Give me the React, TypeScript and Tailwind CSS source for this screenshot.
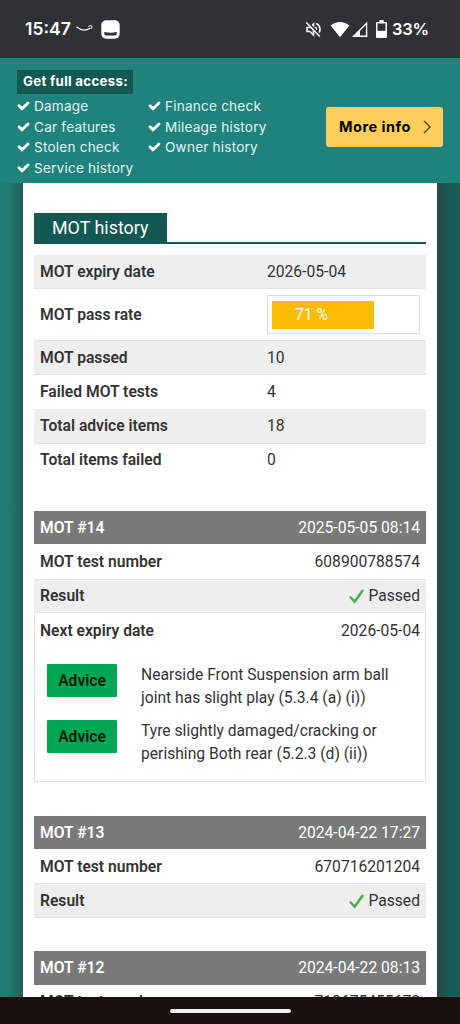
import type { ReactNode } from 'react';

const FEATURES = [
  ['Damage', 'Car features', 'Stolen check', 'Service history'],
  ['Finance check', 'Mileage history', 'Owner history'],
];

const PASS_RATE = 71;

const ADVICE = [
  ['Nearside Front Suspension arm ball', 'joint has slight play (5.3.4 (a) (i))'],
  ['Tyre slightly damaged/cracking or', 'perishing Both rear (5.2.3 (d) (ii))'],
];

function StatusBar() {
  return (
    <header className="flex h-[58px] shrink-0 items-center bg-[#303135] pl-[25px] pr-8 font-['Inter',sans-serif] text-white">
      <span className="w-[51px] whitespace-nowrap text-[17.500px] font-semibold leading-none">15:47</span>
      <svg className="h-[8px] w-[18px]" viewBox="0 0 18 8" fill="none" stroke="#fff">
        <path d="M.8 2C5 5.5 10 5.800 14 3.300" strokeWidth="1.300" strokeLinecap="round" />
        <path d="M12.300 1.300C14.500.7 16 .7 16 1.200c0 .8-.3 1.800-1 2.700" strokeWidth="1" />
      </svg>
      <svg className="ml-[7px] h-[19px] w-[19px]" viewBox="0 0 19 19">
        <rect x=".3" y=".3" width="18.400" height="18.400" rx="5" fill="#fff" />
        <path d="M3.300 12c4 1 8.500 1 12.500 0v1.500c0 1.200-.7 1.900-1.900 1.900H5.200c-1.200 0-1.900-.7-1.900-1.900Z" fill="#303135" />
      </svg>
      <svg className="ml-auto h-[17px] w-[17px]" viewBox="0 0 17 17" fill="none" stroke="#f1f1f1" strokeWidth="1.600">
        <path d="M2 6.500h3L8.500 3v11L5 10.500H2Z" />
        <path d="M10.500 6c1.200 1.300 1.200 3.700 0 5M11 2.500c4.700 1.500 5 7.500 2.200 10" />
        <path d="m2.300 1 13.500 14" stroke="#303135" strokeWidth="2.500" />
        <path d="m1.300 1.500 13.500 14" />
      </svg>
      <svg className="ml-[8px] h-[17px] w-[20px]" viewBox="0 0 20 17">
        <path d="M.6 4.500C6-.3 14-.3 19.400 4.500L10 16.300Z" fill="#fff" />
      </svg>
      <svg className="ml-[2px] h-[17px] w-[16px]" viewBox="0 0 16 17">
        <path d="M14.600 2.300v13H1.700Z" fill="none" stroke="#fff" strokeWidth="1.400" />
        <path d="M8 9v6H1.500Z" fill="#fff" />
      </svg>
      <svg className="ml-[8px] h-[18px] w-[11px]" viewBox="0 0 11 18">
        <path d="M3.300 0h4.400v2H10q1 0 1 1v14q0 1-1 1H1q-1 0-1-1V3q0-1 1-1h2.300Z" fill="#fff" />
        <path d="M1.500 3.500h8v7.300h-8Z" fill="#303135" />
      </svg>
      <span className="ml-[5px] w-[36px] whitespace-nowrap text-[16.500px] font-semibold leading-none tracking-[-0.2px]">33%</span>
    </header>
  );
}

function FeatureCheck() {
  return (
    <svg className="mr-[4px] h-[10px] w-[13px]" viewBox="0 0 13 10">
      <path d="m2 4.800 3 3L11 2" fill="none" stroke="#fff" strokeWidth="2.800" strokeLinecap="round" />
    </svg>
  );
}

function PromoBar() {
  return (
    <section className="flex h-[125px] shrink-0 bg-[#1f827c] font-['Inter',sans-serif] text-white">
      <div className="w-[309px] shrink-0 pl-[17px] pt-[12px]">
        <h2 className="flex h-6 w-[116px] items-center whitespace-nowrap bg-[#145853] pl-[6px] text-[13.250px] font-bold tracking-[0.3px]">
          Get full access:
        </h2>
        <div className="mt-[2px] flex">
          {FEATURES.map((column) => (
            <ul key={column[0]} className="w-[131px] shrink-0">
              {column.map((item) => (
                <li key={item} className="flex h-[20.600px] items-center whitespace-nowrap text-[13.600px] tracking-[0.2px] text-[#e2f3f1]">
                  <FeatureCheck />
                  {item}
                </li>
              ))}
            </ul>
          ))}
        </div>
      </div>
      <button className="ml-[17px] mt-[49px] flex h-10 w-[117px] items-center justify-between whitespace-nowrap rounded-[3px] bg-[#ffce5a] pl-[13px] pr-[12px] text-[14.500px] font-bold tracking-[0.500px] text-black">
        <span className="-mt-px">More info</span>
        <svg className="h-[14px] w-[8px]" viewBox="0 0 8 14" fill="none" stroke="#4d3a10" strokeWidth="1.300">
          <path d="m1 1 6 6-6 6" />
        </svg>
      </button>
    </section>
  );
}

function SummaryRow({ label, value, shaded }: { label: string; value: string; shaded?: boolean }) {
  return (
    <div className={`flex h-[34.300px] items-center border-b pl-[6px] ${shaded ? 'border-[#e2e2e2] bg-[#eee]' : 'border-transparent'}`}>
      <span className="w-[227px] font-semibold">{label}</span>
      <span>{value}</span>
    </div>
  );
}

function TestHeader({ title, date }: { title: string; date: string }) {
  return (
    <div className="flex h-[33.300px] items-center justify-between bg-[#7a7a7a] px-[6px] text-white">
      <span className="font-semibold">{title}</span>
      <span>{date}</span>
    </div>
  );
}

function TestRow({ label, children, shaded }: { label: string; children: ReactNode; shaded?: boolean }) {
  return (
    <div className={`flex h-[34.300px] items-center justify-between px-[6px] ${shaded ? 'border-y border-[#e2e2e2] bg-[#eee]' : ''}`}>
      <span className="font-semibold">{label}</span>
      <span className="flex items-center">{children}</span>
    </div>
  );
}

function Passed() {
  return (
    <>
      <svg className="mr-[4px] mt-[2px] h-[15px] w-[15px]" viewBox="0 0 15 15">
        <path d="m1.800 8.500 3.800 4.300L13.500 1.800" fill="none" stroke="#4cae44" strokeWidth="2.500" strokeLinecap="round" />
      </svg>
      Passed
    </>
  );
}

export default function App() {
  return (
    <div className="flex h-[1024px] w-[460px] flex-col overflow-hidden">
      <StatusBar />
      <PromoBar />

      <div className="flex h-[814px] shrink-0 overflow-hidden">
        <div className="w-[23px] shrink-0 bg-linear-to-r from-[#1e7d76] from-30% to-[#265e5b]" />

        <main className="h-full w-[414px] shrink-0 overflow-hidden bg-white px-[11px] pt-[30px] font-['Roboto',sans-serif] text-[15.650px] text-[#333]">
          <div className="h-[31px] border-b-2 border-[#145853]">
            <h1 className="flex h-[29px] w-[133px] items-center whitespace-nowrap bg-[#145853] pl-[18px] pt-[2px] text-[17.900px] text-white">
              MOT history
            </h1>
          </div>

          <section className="mt-[11px]">
            <SummaryRow label="MOT expiry date" value="2026-05-04" shaded />
            <div className="flex h-[50.400px] items-center pl-[6px]">
              <span className="w-[227px] font-semibold">MOT pass rate</span>
              <div className="h-[39px] w-[153px] border border-[#ddd] p-[4px] pt-[5px]">
                <div
                  className="flex h-[28px] items-center bg-[#fbbc05] pl-[23px] text-white"
                  style={{ width: `${PASS_RATE}%` }}
                >
                  {PASS_RATE} %
                </div>
              </div>
            </div>
            <div className="border-t border-[#e2e2e2]">
              <SummaryRow label="MOT passed" value="10" shaded />
              <SummaryRow label="Failed MOT tests" value="4" />
              <SummaryRow label="Total advice items" value="18" shaded />
              <SummaryRow label="Total items failed" value="0" />
            </div>
          </section>

          <section className="mt-[33.100px]">
            <TestHeader title="MOT #14" date="2025-05-05 08:14" />
            <TestRow label="MOT test number">608900788574</TestRow>
            <TestRow label="Result" shaded><Passed /></TestRow>
            <div className="h-[169px] border border-t-0 border-[#e2e2e2]">
              <div className="-mx-px pt-px">
                <TestRow label="Next expiry date">2026-05-04</TestRow>
              </div>
              <ul className="mt-[14px] flex flex-col gap-[11px] pl-[12px]">
                {ADVICE.map((lines) => (
                  <li key={lines[0]} className="flex h-[45px]">
                    <span className="mt-[1.500px] flex h-[33.500px] w-[70px] shrink-0 items-center justify-center rounded-[1px] bg-[#00a651] font-semibold text-[#0c1a10]">
                      Advice
                    </span>
                    <p className="ml-6 whitespace-nowrap pt-[2px] leading-[22.500px]">
                      {lines[0]}
                      <br />
                      {lines[1]}
                    </p>
                  </li>
                ))}
              </ul>
            </div>
          </section>

          <section className="mt-[34px]">
            <TestHeader title="MOT #13" date="2024-04-22 17:27" />
            <TestRow label="MOT test number">670716201204</TestRow>
            <TestRow label="Result" shaded><Passed /></TestRow>
          </section>

          <section className="mt-[33.500px]">
            <TestHeader title="MOT #12" date="2024-04-22 08:13" />
            <TestRow label="MOT test number">718675455672</TestRow>
          </section>
        </main>

        <div className="w-[23px] shrink-0 bg-linear-to-r from-[#254b49] to-[#155a55] to-60%" />
      </div>

      <footer className="flex h-[27px] shrink-0 items-center justify-center bg-[#1c100e]">
        <div className="h-1 w-[121px] rounded-full bg-[#f1efee]" />
      </footer>
    </div>
  );
}
